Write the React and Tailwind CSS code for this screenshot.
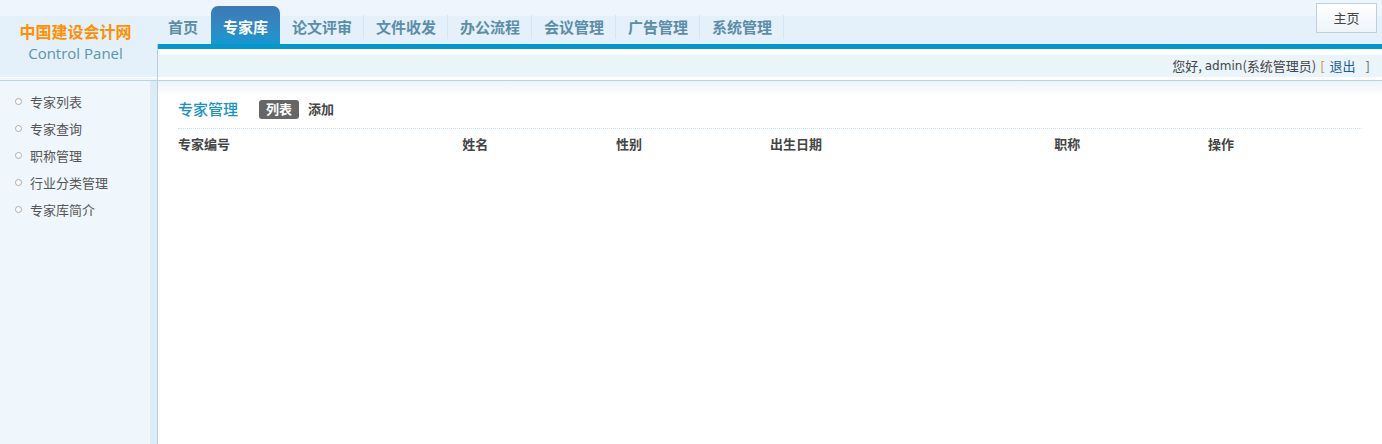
import React from "react";

const cjk = { fontFamily: '"Noto Sans CJK SC", "Liberation Sans", sans-serif' };

const navItems = ["论文评审", "文件收发", "办公流程", "会议管理", "广告管理", "系统管理"];
const sideItems = ["专家列表", "专家查询", "职称管理", "行业分类管理", "专家库简介"];
const columns = [
    { label: "专家编号", w: "w-[24%]" },
    { label: "姓名", w: "w-[13%]" },
    { label: "性别", w: "w-[13%]" },
    { label: "出生日期", w: "w-[24%]" },
    { label: "职称", w: "w-[13%]" },
    { label: "操作", w: "w-[13%]" },
];

const App = () => {
    return (
        <div className="h-[444px] w-full flex flex-col bg-white overflow-hidden" style={cjk}>
            {/* header */}
            <div className="h-[80px] flex bg-gradient-to-b from-[#eef5fc] from-20% to-[#e4f0fa] to-20%">
                <div className="w-[157px] flex flex-col">
                    <div className="h-[77px] flex flex-col items-center pt-[20px] pr-[6px]">
                        <div className="text-[16px] leading-[22px] font-bold text-[#ff9000]">中国建设会计网</div>
                        <div
                            className="text-[15px] leading-[20px] text-[#5d94aa] mt-[1px]"
                            style={{ fontFamily: '"Open Sans", "DejaVu Sans", sans-serif' }}
                        >
                            Control Panel
                        </div>
                    </div>
                    <div className="h-[1px] bg-white" />
                    <div className="h-[2px] bg-[#eef6fc]" />
                </div>
                <div className="flex-1 flex flex-col">
                    <div className="h-[44px] flex items-end justify-between">
                        <div className="flex items-end h-full pt-[6px]">
                            <div className="h-[38px] px-[11px] flex items-center text-[15px] font-bold text-[#5b8ea6] pt-[4px]">首页</div>
                            <div className="h-[38px] px-[12px] ml-[2px] flex items-center text-[15px] font-bold text-white rounded-t-[7px] bg-gradient-to-b from-[#3d78b6] to-[#1597d0] pt-[4px]">
                                专家库
                            </div>
                            {navItems.map((item) => (
                                <div key={item} className="h-[38px] flex items-center">
                                    <div className="pl-[12px] pr-[11px] text-[15px] font-bold text-[#5b8ea6] pt-[4px]">{item}</div>
                                    <div className="w-[1px] h-[24px] bg-[#d6e6f1] mt-[4px]" />
                                </div>
                            ))}
                        </div>
                        <div className="self-start mt-[3px] mr-[5px]">
                            <div className="w-[61px] h-[30px] border border-[#b7d3de] bg-gradient-to-b from-white to-[#eef4f8] flex items-center justify-center text-[13px] text-[#444]">
                                主页
                            </div>
                        </div>
                    </div>
                    <div className="flex-1 flex flex-col border-l border-[#b7cfdc]">
                        <div className="h-[5px] bg-[#0099cf]" />
                        <div className="h-[6px] bg-white" />
                        <div className="h-[22px] bg-[#eaf4fb] flex items-center justify-end pr-[12px] text-[13px] text-[#444]">
                            <span>您好,</span>
                            <span style={{ fontFamily: '"DejaVu Sans", sans-serif' }} className="text-[12px] ml-[3px]">admin</span>
                            <span>(系统管理员)</span>
                            <span className="text-[#c48a3e] ml-[4px]">[</span>
                            <a className="text-[#1a5c9e] ml-[5px]">退出</a>
                            <span className="text-[#666] ml-[10px]">]</span>
                        </div>
                        <div className="h-[3px] bg-white" />
                    </div>
                </div>
            </div>
            <div className="h-[1px] bg-[#b9d3df]" />

            {/* body */}
            <div className="flex-1 flex">
                <div className="w-[157px] flex bg-[#eff7fc]">
                    <div className="flex-1 pt-[7px]">
                        {sideItems.map((item) => (
                            <div key={item} className="h-[27px] flex items-center pl-[15px] text-[13px] text-[#555]">
                                <span className="w-[7px] h-[7px] rounded-full border border-[#aaa] bg-white mr-[8px]" />
                                {item}
                            </div>
                        ))}
                    </div>
                    <div className="w-[7px] bg-[#dcecf7]" />
                </div>
                <div className="w-[1px] bg-[#b7cfdc]" />
                <div className="flex-1 bg-gradient-to-b from-[#e9f3fa] to-white to-[14px] px-[20px] pt-[16px]">
                    <div className="flex items-center h-[24px]">
                        <div className="text-[15px] text-[#1592c9] font-medium">专家管理</div>
                        <div className="ml-[21px] h-[19px] px-[7px] rounded-[3px] bg-[#666] text-white text-[13px] font-bold flex items-center">列表</div>
                        <div className="ml-[9px] text-[13px] font-bold text-[#444]">添加</div>
                    </div>
                    <div className="mt-[7px] border-t border-dotted border-[#bfe1f2]" />
                    <div className="flex h-[30px] items-center text-[13px] font-bold text-[#444]">
                        {columns.map((c) => (
                            <div key={c.label} className={c.w}>{c.label}</div>
                        ))}
                    </div>
                </div>
            </div>
        </div>
    );
};

export default App;
